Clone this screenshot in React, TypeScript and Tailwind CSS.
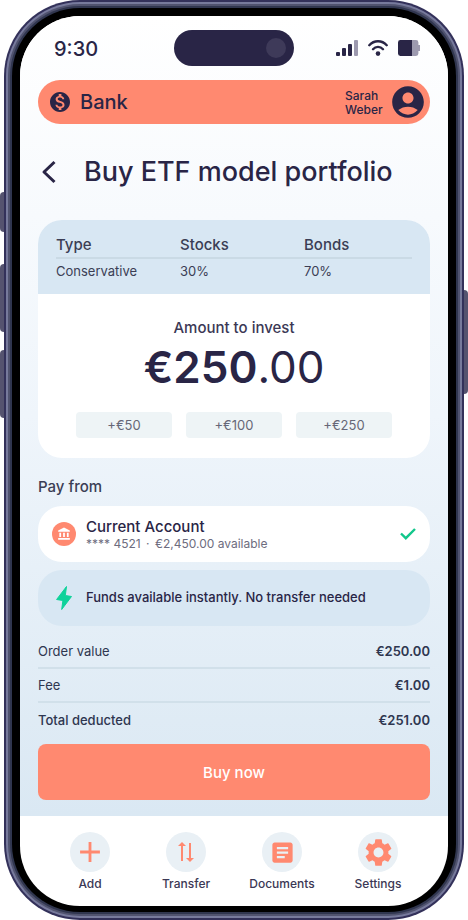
import { useState } from "react";
import {
  MdAccountBalance,
  MdAccountCircle,
  MdAdd,
  MdArticle,
  MdMonetizationOn,
  MdSettings,
} from "react-icons/md";

const TOP_UPS = [50, 100, 250];

function SignalIcon() {
  return (
    <svg width="22" height="16" viewBox="0 0 22 16" aria-hidden="true">
      <g fill="#292546">
        <rect x="0" y="12" width="4" height="4" rx="1" />
        <rect x="6" y="8" width="4" height="8" rx="1" />
        <rect x="12" y="4" width="4" height="12" rx="1" />
      </g>
      <rect x="18" y="0" width="4" height="16" rx="1" fill="#9d9aaf" />
    </svg>
  );
}

function WifiIcon() {
  return (
    <svg width="20" height="16" viewBox="0 0 20 16" fill="none" stroke="#292546" strokeWidth="2.4" strokeLinecap="round" aria-hidden="true">
      <path d="M1.3 5.2C6 0 14 0 18.700 5.200" />
      <path d="M5 9.2C7.700 6.100 12.300 6.100 15 9.200" />
      <circle cx="10" cy="13.600" r="2.300" fill="#292546" stroke="none" />
    </svg>
  );
}

function BatteryIcon() {
  return (
    <svg width="22" height="16" viewBox="0 0 22 16" aria-hidden="true">
      <path d="M14 0h4a2.400 2.400 0 0 1 2.400 2.400V5H22v6h-1.600v2.600A2.400 2.400 0 0 1 18 16h-4z" fill="#9d9aaf" />
      <path d="M14 0H2.400A2.400 2.400 0 0 0 0 2.400v11.200A2.400 2.400 0 0 0 2.400 16H14z" fill="#292546" />
    </svg>
  );
}

function BackIcon() {
  return (
    <svg width="22" height="24" viewBox="0 0 22 24" fill="none" stroke="#292546" strokeWidth="3" strokeLinejoin="round" aria-hidden="true">
      <path d="M16.500 2L6 12l10.500 10" />
    </svg>
  );
}

function CheckIcon() {
  return (
    <svg width="16" height="12" viewBox="0 0 16 12" fill="none" stroke="#12c78b" strokeWidth="2.4" aria-hidden="true">
      <path d="M1 5.500l4.800 4.700L15 1" />
    </svg>
  );
}

function BoltIcon() {
  return (
    <svg width="16" height="24" viewBox="0 0 16 24" fill="#0ed29a" stroke="#0ed29a" strokeLinejoin="round" aria-hidden="true">
      <path d="M10.500 0.500L0.600 13.500l6.300 1L5.700 23.500L15.500 10.500l-6.200-1z" />
    </svg>
  );
}

function TransferIcon() {
  return (
    <svg width="16" height="20" viewBox="0 0 16 20" fill="#ff8970" aria-hidden="true">
      <path d="M4 0l4 4H5v15H3V4H0z" />
      <path d="M12 20l-4-4h3V1h2v15h3z" />
    </svg>
  );
}

const NAV = [
  { label: "Add", icon: <MdAdd size={34} /> },
  { label: "Transfer", icon: <TransferIcon /> },
  { label: "Documents", icon: <MdArticle size={27} /> },
  { label: "Settings", icon: <MdSettings size={33} /> },
];

function StatusBar() {
  return (
    <div className="grid h-16 grid-cols-[1fr_120px_1fr] items-center">
      <span className="pt-0.5 pl-4 text-xl font-medium">9:30</span>
      <div className="flex h-9 items-center justify-end rounded-full bg-[#292546] px-2">
        <span className="size-5 rounded-full bg-[#3e3a59]" />
      </div>
      <div className="flex items-center justify-end gap-2.5 pr-2.5">
        <SignalIcon />
        <WifiIcon />
        <BatteryIcon />
      </div>
    </div>
  );
}

function SummaryRow({ label, value, strong }: { label: string; value: string; strong?: boolean }) {
  return (
    <div className="flex h-[34px] items-center justify-between pt-0.5 text-[13px]">
      <dt className={strong ? "font-medium" : ""}>{label}</dt>
      <dd className="font-semibold">{value}</dd>
    </div>
  );
}

export default function App() {
  const [amount, setAmount] = useState(250);

  return (
    <div className="relative px-1 font-[Inter,sans-serif] text-[#292546]">
      {/* hardware buttons */}
      <span className="absolute top-48 left-0 h-10 w-2 rounded-l-sm bg-[#55536f]" />
      <span className="absolute top-[264px] left-0 h-[68px] w-2 rounded-l-sm bg-[#55536f]" />
      <span className="absolute top-[350px] left-0 h-[68px] w-2 rounded-l-sm bg-[#55536f]" />
      <span className="absolute top-[290px] right-0 h-[104px] w-2 rounded-r-sm bg-[#55536f]" />

      <div className="relative rounded-[76px] bg-[#33315a] p-0.5">
        <div className="rounded-[74px] bg-[#777a9c] p-0.5">
          <div className="rounded-[72px] bg-[#50536f] p-0.5">
            <div className="rounded-[70px] bg-[#30364f] p-0.5">
              <div className="rounded-[68px] bg-black p-2 pb-1.5">
                <div className="overflow-hidden rounded-[60px] bg-white">
                  <main className="bg-linear-to-b from-white via-[#eff5fb] to-[#dae8f3] px-[18px] pb-4">
                    <StatusBar />

                    <header className="flex h-11 items-center rounded-full bg-[#ff8970] pr-[3px] pl-2.5">
                      <MdMonetizationOn size={24} />
                      <span className="ml-2 text-xl font-medium">Bank</span>
                      <span className="ml-auto w-10 pt-0.5 text-xs leading-[14px] font-medium">Sarah Weber</span>
                      <MdAccountCircle size={38} className="ml-1" />
                    </header>

                    <div className="mt-7 flex h-10 items-center gap-6">
                      <button type="button" aria-label="Back">
                        <BackIcon />
                      </button>
                      <h1 className="text-[27px] font-medium whitespace-nowrap">Buy ETF model portfolio</h1>
                    </div>

                    <section className="mt-7 overflow-hidden rounded-3xl bg-white">
                      <div className="h-[74px] bg-[#d8e7f3] px-[18px] pt-3 text-[#3b3e55]">
                        <table className="w-full table-fixed text-left">
                          <thead>
                            <tr className="h-[26px] border-b-2 border-[#cadae5] text-[15px]">
                              <th className="w-[124px] pt-0.5 font-medium">Type</th>
                              <th className="w-[124px] pt-0.5 font-medium">Stocks</th>
                              <th className="pt-0.5 font-medium">Bonds</th>
                            </tr>
                          </thead>
                          <tbody>
                            <tr className="h-[26px] text-[13px]">
                              <td>Conservative</td>
                              <td>30%</td>
                              <td>70%</td>
                            </tr>
                          </tbody>
                        </table>
                      </div>
                      <div className="px-[38px] pt-[22px] pb-5 text-center">
                        <h2 className="text-[15px] leading-6 font-medium text-[#3b3855]">Amount to invest</h2>
                        <p className="text-[44px] leading-[54px] font-semibold">
                          €{amount}
                          <span className="font-normal">.00</span>
                        </p>
                        <div className="mt-[18px] grid grid-cols-3 gap-3.5">
                          {TOP_UPS.map((n) => (
                            <button
                              key={n}
                              type="button"
                              onClick={() => setAmount(amount + n)}
                              className="h-[26px] rounded bg-[#eef4f6] pt-0.5 text-[13px] text-[#666777]"
                            >
                              +€{n}
                            </button>
                          ))}
                        </div>
                      </div>
                    </section>

                    <h2 className="mt-[18px] text-[15px] leading-[22px] font-medium text-[#3b3e55]">Pay from</h2>
                    <button type="button" className="mt-2 flex h-14 w-full items-center rounded-3xl bg-white px-3.5 text-left">
                      <span className="flex size-6 items-center justify-center rounded-full bg-[#ff8970] text-white">
                        <MdAccountBalance size={14} />
                      </span>
                      <span className="ml-2.5 flex flex-col pt-0.5">
                        <span className="text-[15px] leading-[18px] font-medium">Current Account</span>
                        <span className="text-xs leading-4 text-[#6d6c7e]">
                          **** 4521 <span className="mx-0.5">·</span> €2,450.00 available
                        </span>
                      </span>
                      <span className="ml-auto">
                        <CheckIcon />
                      </span>
                    </button>

                    <div className="mt-2 flex h-14 items-center gap-3.5 rounded-3xl bg-[#d8e7f3] px-[18px]">
                      <BoltIcon />
                      <p className="text-[13px] font-medium">Funds available instantly. No transfer needed</p>
                    </div>

                    <dl className="mt-2 divide-y-2 divide-[#d1e0ea] pt-px text-[#2e3650]">
                      <SummaryRow label="Order value" value={`€${amount}.00`} />
                      <SummaryRow label="Fee" value="€1.00" />
                      <SummaryRow label="Total deducted" value={`€${amount + 1}.00`} strong />
                    </dl>

                    <button type="button" className="mt-[7px] h-14 w-full rounded-lg bg-[#ff8970] pt-0.5 text-[15px] font-medium text-white">
                      Buy now
                    </button>
                  </main>

                  <nav className="grid grid-cols-4 px-[22px] pt-4 pb-3.5">
                    {NAV.map((item) => (
                      <a key={item.label} href="#" className="flex flex-col items-center gap-1">
                        <span className="flex size-10 items-center justify-center rounded-full bg-[#e9f0f5] text-[#ff8970]">{item.icon}</span>
                        <span className="text-xs leading-4 font-medium text-[#3b3855]">{item.label}</span>
                      </a>
                    ))}
                  </nav>
                </div>
              </div>
            </div>
          </div>
        </div>
      </div>
    </div>
  );
}
